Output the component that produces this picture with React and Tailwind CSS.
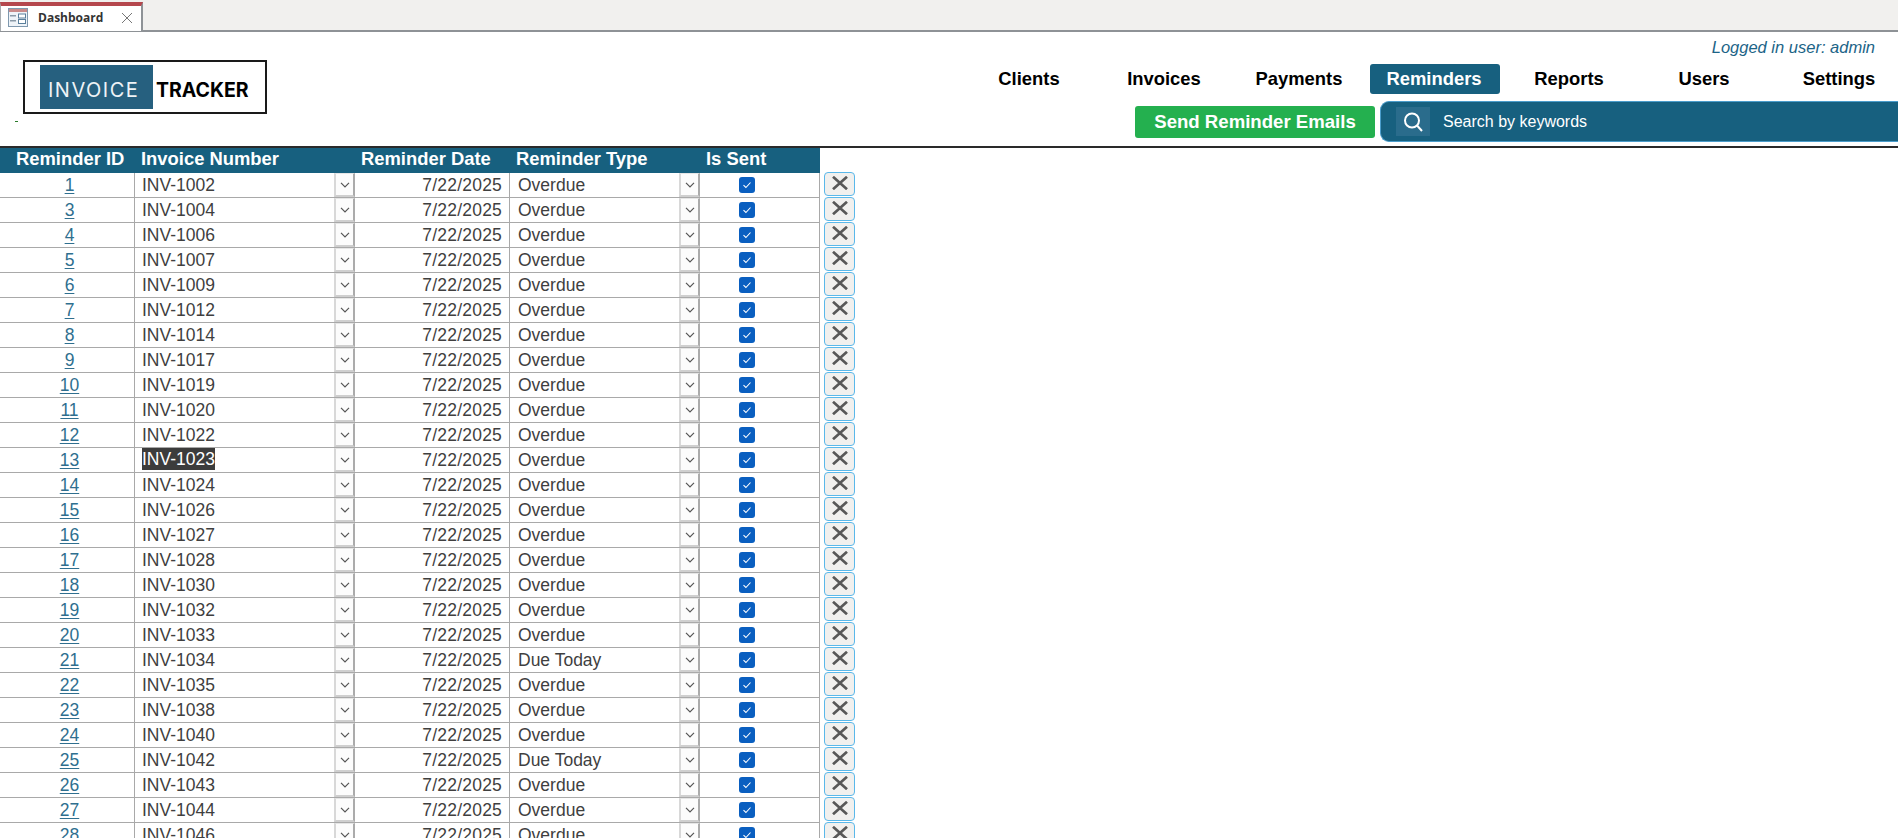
import React from "react";

const rows = [
  [1, 1002], [3, 1004], [4, 1006], [5, 1007], [6, 1009], [7, 1012], [8, 1014], [9, 1017],
  [10, 1019], [11, 1020], [12, 1022], [13, 1023], [14, 1024], [15, 1026], [16, 1027], [17, 1028],
  [18, 1030], [19, 1032], [20, 1033], [21, 1034, "Due Today"], [22, 1035], [23, 1038], [24, 1040],
  [25, 1042, "Due Today"], [26, 1043], [27, 1044], [28, 1046],
];

const navItems = ["Clients", "Invoices", "Payments", "Reminders", "Reports", "Users", "Settings"];

function TabIcon() {
  return (
    <svg width="20" height="19" viewBox="0 0 20 19" className="shrink-0">
      <rect x="0.5" y="0.5" width="19" height="18" fill="#eef3f8" stroke="#7f98ae" />
      <rect x="1" y="1" width="18" height="3" fill="#c98a8a" />
      <rect x="2" y="7" width="6" height="1.5" fill="#8a9aa8" />
      <rect x="2" y="12" width="6" height="1.5" fill="#8a9aa8" />
      <rect x="10.5" y="6" width="7" height="4" fill="#ffffff" stroke="#5a7f9c" />
      <rect x="10.5" y="11.5" width="7" height="4" fill="#ffffff" stroke="#5a7f9c" />
    </svg>
  );
}

function DropButton() {
  return (
    <div className="flex h-[24px] w-[21px] shrink-0 items-center justify-center border-x-2 border-b-2 border-t border-l-[#d8d8d8] border-r-[#ababab] border-t-[#e6e6e6] border-b-[#cfcfcf] bg-[#fcfcfc]">
      <svg width="10" height="6" viewBox="0 0 10 6">
        <path d="M1 0.8 L5 4.8 L9 0.8" fill="none" stroke="#555" strokeWidth="1.2" />
      </svg>
    </div>
  );
}

function Row({ id, inv, type }) {
  const selected = id === 13;
  return (
    <div className="flex h-[25px] shrink-0">
      <div className="flex h-[25px] w-[820px] shrink-0 border-b border-[#a9a9a9] text-[17.5px] leading-[24px] text-[#3f3f3f]">
        <div className="w-[135px] shrink-0 border-r border-[#a9a9a9] pl-[5px] text-center text-[#2f6f8f] underline underline-offset-2">
          {id}
        </div>
        <div className="flex w-[220px] shrink-0 justify-between pl-[7px]">
          <span className={selected ? "h-[22px] self-start bg-[#3c3c3c] leading-[22px] text-white" : ""}>INV-{inv}</span>
          <DropButton />
        </div>
        <div className="w-[155px] shrink-0 border-r border-[#a9a9a9] pr-[7px] text-right tracking-[0.2px]">7/22/2025</div>
        <div className="flex w-[190px] shrink-0 justify-between pl-[8px]">
          <span>{type || "Overdue"}</span>
          <DropButton />
        </div>
        <div className="flex w-[120px] shrink-0 items-center justify-center border-r border-[#a9a9a9] pr-[26px]">
          <div className="flex h-4 w-4 items-center justify-center rounded-[3px] bg-[#0a5fc0]">
            <svg width="10" height="8" viewBox="0 0 10 8">
              <path d="M1.5 4.2 L3.9 6.5 L8.5 1.5" fill="none" stroke="#ffffff" strokeWidth="1.1" />
            </svg>
          </div>
        </div>
      </div>
      <div className="-mt-px ml-1 flex h-[24px] w-[31px] shrink-0 items-center justify-center rounded-[4px] border-[1.5px] border-[#5ab8ea] bg-[#f1f0ee] pb-[3px]">
        <svg width="16" height="14" viewBox="0 0 16 14">
          <path d="M1 0.8 L15 13.2 M15 0.8 L1 13.2" fill="none" stroke="#585858" strokeWidth="2.7" />
        </svg>
      </div>
    </div>
  );
}

export default function App() {
  return (
    <div className="flex h-[838px] w-[1898px] flex-col overflow-hidden bg-white font-['Liberation_Sans',Arial,sans-serif]">
      {/* Document tab strip */}
      <div className="flex h-8 shrink-0 border-b-2 border-[#8e9296] bg-[#f1f0ee] pt-0.5">
        <div className="flex h-[29px] w-[143px] items-center border-t-4 border-r-2 border-l border-t-[#b5474d] border-r-[#8e9296] border-l-[#a8acb0] bg-white pb-[2px] pl-[7px]">
          <TabIcon />
          <span className="ml-[10px] font-['Open_Sans',sans-serif] text-[12px] font-bold text-[#333]">Dashboard</span>
          <svg width="12" height="12" viewBox="0 0 12 12" className="ml-[18px]">
            <path d="M1 1 L11 11 M11 1 L1 11" fill="none" stroke="#777" strokeWidth="1" />
          </svg>
        </div>
      </div>

      {/* Header */}
      <div className="flex h-[114px] shrink-0">
        <div className="flex w-[965px] shrink-0 flex-col pl-[23px] pt-7">
          <div className="flex h-[54px] w-[244px] items-center border-2 border-[#1a1a1a] pl-[15px]">
            <div className="flex h-[44px] w-[113px] items-center bg-[#26607f] pl-2 pt-[6px] font-['Inter',sans-serif] text-[20px] tracking-[1.5px] text-[#eef3f6]">
              INVOICE
            </div>
            <div className="ml-[3px] pt-[6px] font-['Inter',sans-serif] text-[19.5px] font-bold leading-6 text-black">TRACKER</div>
          </div>
          <div className="-ml-2 mt-[7px] h-px w-[3px] bg-[#2a7a2a]" />
        </div>
        <div className="flex min-w-0 flex-1 flex-col">
          <div className="h-[32px] pr-[23px] pt-[3px] text-right text-[16.5px] italic leading-6 text-[#1c6487]">
            Logged in user: admin
          </div>
          <div className="flex h-[30px] gap-[5px]">
            {navItems.map((n) => (
              <div
                key={n}
                className={
                  "flex h-[30px] w-[130px] shrink-0 items-center justify-center rounded-[3px] pr-[2px] text-[18.4px] font-bold " +
                  (n === "Reminders" ? "bg-[#17607f] text-white" : "text-black")
                }
              >
                {n}
              </div>
            ))}
          </div>
          <div className="flex items-start pl-[170px] pt-[7px]">
            <div className="mt-[5px] flex h-8 w-[240px] items-center justify-center rounded-[3px] bg-[#24b04f] text-[18.6px] font-bold text-white">
              Send Reminder Emails
            </div>
            <div className="ml-[5px] flex h-[41px] flex-1 items-center rounded-l-[9px] border border-r-0 border-[#4a9ccb] bg-[#17607f] pl-[15px]">
              <div className="flex h-[29px] w-[34px] items-center justify-center bg-[#2a6c8c]">
                <svg width="22" height="22" viewBox="0 0 22 22">
                  <circle cx="10" cy="9.5" r="7" fill="none" stroke="#ffffff" strokeWidth="2" />
                  <path d="M15 14.5 L20 20" stroke="#ffffff" strokeWidth="2" />
                </svg>
              </div>
              <span className="ml-[13px] text-[16px] text-white">Search by keywords</span>
            </div>
          </div>
        </div>
      </div>

      {/* Divider */}
      <div className="h-[2px] shrink-0 bg-[#2a2a2a]" />

      {/* Table */}
      <div className="flex h-[25px] w-[820px] shrink-0 bg-[#17607f] text-[18.4px] font-bold leading-[22px] text-white">
        <div className="w-[135px] shrink-0 pl-4">Reminder ID</div>
        <div className="w-[220px] shrink-0 pl-[6px]">Invoice Number</div>
        <div className="w-[155px] shrink-0 pl-[6px]">Reminder Date</div>
        <div className="w-[190px] shrink-0 pl-[6px]">Reminder Type</div>
        <div className="w-[120px] shrink-0 pl-[6px]">Is Sent</div>
      </div>
      <div className="flex flex-col">
        {rows.map(([id, inv, type]) => (
          <Row key={id} id={id} inv={inv} type={type} />
        ))}
      </div>
    </div>
  );
}
